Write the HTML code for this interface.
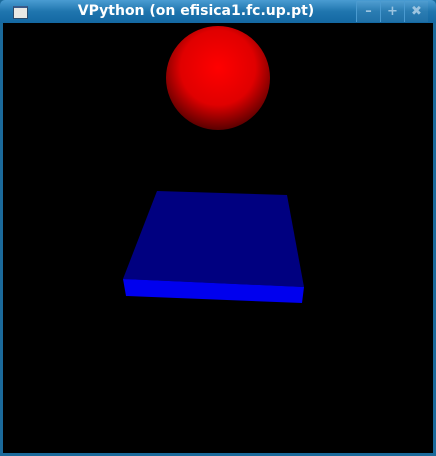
<!DOCTYPE html>
<html><head><style>
body{margin:0;width:436px;height:456px;overflow:hidden;background:#1b6a9b;font-family:"DejaVu Sans","Liberation Sans",sans-serif}
.tb{position:absolute;left:0;top:0;width:436px;height:23px;background:linear-gradient(#4a9cd2,#1f75ae 50%,#1468a2);border-radius:5px 5px 0 0}
.t{position:absolute;left:0;width:392px;top:3px;text-align:center;color:#fff;font-weight:bold;font-size:14px}
.ic{position:absolute;left:13px;top:6px;width:13px;height:10px;background:#e8e8e4;border:1px solid #2a4a6a;border-top:2px solid #3a5a8a}
.b{position:absolute;top:1px;width:23px;height:21px;border-left:1px solid #4a9ad0;color:#9cc4e0;font-weight:bold;font-size:13px;text-align:center;line-height:21px;background:rgba(255,255,255,.05)}
.c{position:absolute;left:3px;top:23px;width:430px;height:430px;background:#000}
</style></head><body>
<div class="tb"><div class="ic"></div><div class="t">VPython (on efisica1.fc.up.pt)</div>
<div class="b" style="left:356px">–</div><div class="b" style="left:380px">+</div><div class="b" style="left:404px">✖</div></div>
<div class="c"></div>
<svg style="position:absolute;left:0;top:0" width="436" height="456">
<defs><radialGradient id="g" cx="0.5" cy="0.4" r="0.6"><stop offset="0" stop-color="#ff0000"/><stop offset="0.6" stop-color="#e00000"/><stop offset="1" stop-color="#5a0000"/></radialGradient></defs>
<circle cx="218" cy="78" r="52" fill="url(#g)"/>
<polygon points="157,191 287,195 304,287 123,279" fill="#000080"/>
<polygon points="123,279 304,287 302,303 126,296" fill="#0000ee"/>
</svg>
</body></html>
